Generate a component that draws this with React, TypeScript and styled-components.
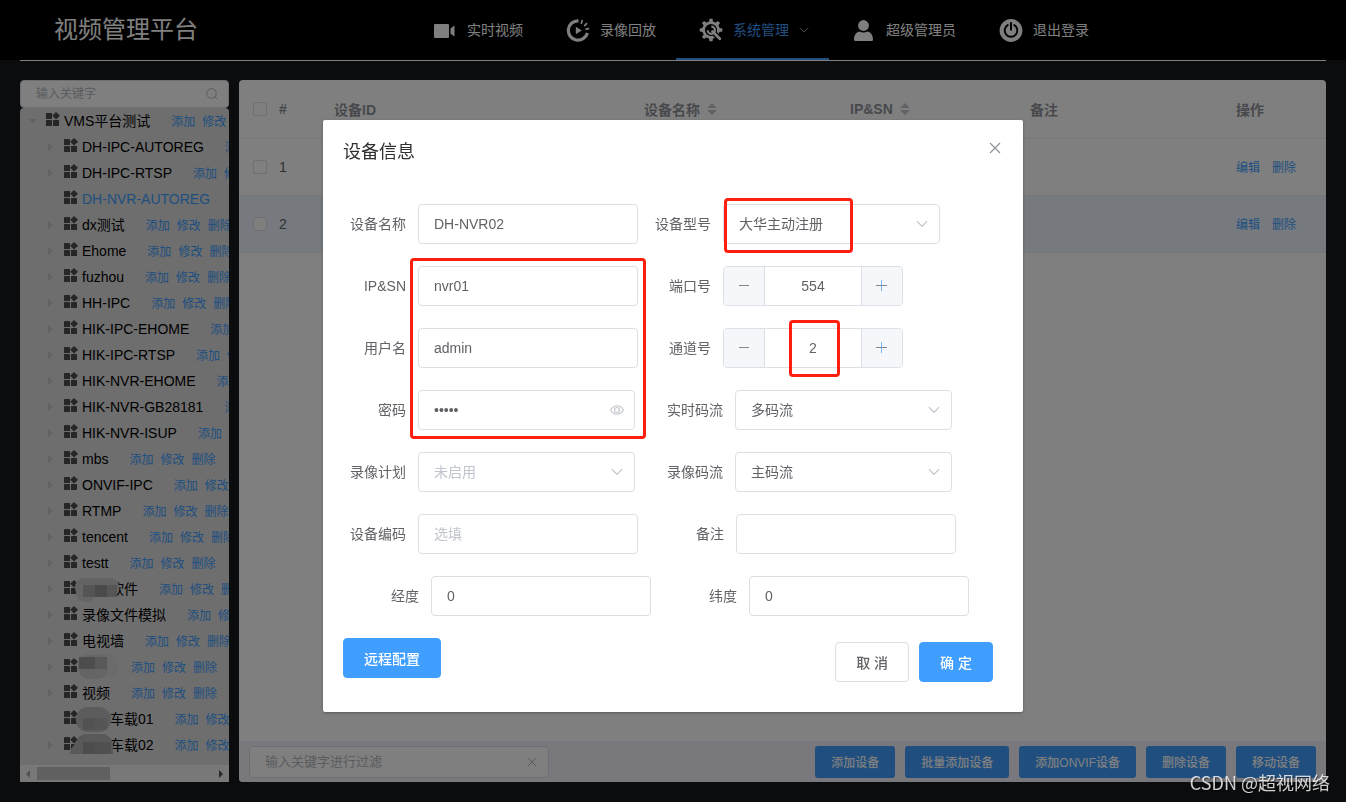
import React from "react";
import styled, { createGlobalStyle } from "styled-components";

const GlobalStyle = createGlobalStyle`
  * { box-sizing: border-box; }
  body {
    margin: 0;
    background: #16181c;
    color: #606266;
    font-family: "Liberation Sans", "Noto Sans CJK SC", sans-serif;
    font-size: 14px;
  }
  input, select, button { font-family: inherit; }
  a { text-decoration: none; }
`;

/* ---------- page shell ---------- */

const Page = styled.div`
  display: flex;
  flex-direction: column;
  min-height: 100vh;
`;

const Header = styled.header`
  display: flex;
  padding: 0 20px;
  height: 60px;
  background: #000;
`;

const Brand = styled.h1`
  flex: none;
  width: 390px;
  margin: 0;
  padding-left: 34px;
  color: #fff;
  font-size: 24px;
  font-weight: 400;
  line-height: 60px;
`;

const Nav = styled.nav`
  display: flex;
`;

const NavLink = styled.a<{ $active?: boolean }>`
  display: flex;
  align-items: center;
  gap: 10px;
  padding: 2px 20px 0 23px;
  border-bottom: 2px solid ${(p) => (p.$active ? "#409eff" : "transparent")};
  color: ${(p) => (p.$active ? "#409eff" : "#fff")};
  white-space: nowrap;
  line-height: 20px;
`;

const Rule = styled.hr`
  width: calc(100% - 40px);
  height: 1px;
  margin: 0 20px;
  border: 0;
  background: #fff;
`;

const Content = styled.main`
  display: flex;
  flex: 1;
  gap: 10px;
  padding: 19px 20px 20px;
`;

/* ---------- sidebar ---------- */

const Sidebar = styled.aside`
  display: flex;
  flex: none;
  flex-direction: column;
  width: 209px;
`;

const SearchBox = styled.label`
  display: flex;
  align-items: center;
  height: 28px;
  padding: 0 10px 0 15px;
  border: 1px solid #dcdfe6;
  border-radius: 4px;
  background: #fff;
`;

const SearchInput = styled.input`
  flex: 1;
  min-width: 0;
  padding: 0;
  border: 0;
  outline: 0;
  background: none;
  color: #606266;
  font-size: 12px;
  &::placeholder { color: #b4b8c0; }
`;

const Tree = styled.ul`
  flex: 1;
  margin: 0;
  padding: 0;
  overflow: hidden;
  border-radius: 4px 4px 0 0;
  background: #dcdcdc;
  list-style: none;
`;

const TreeRow = styled.li<{ $depth: number }>`
  position: relative;
  display: flex;
  align-items: center;
  height: 26px;
  padding-left: ${(p) => p.$depth * 18}px;
  white-space: nowrap;
`;

const ArrowSlot = styled.span`
  display: flex;
  flex: none;
  justify-content: center;
  width: 26px;
`;

const NodeIcon = styled.svg`
  flex: none;
  margin: 0 4px 4px 0;
`;

const NodeLabel = styled.span<{ $active?: boolean; $indent?: number }>`
  padding-left: ${(p) => p.$indent || 0}px;
  color: ${(p) => (p.$active ? "#409eff" : "#000")};
  line-height: 26px;
`;

const NodeActions = styled.span`
  display: flex;
  gap: 7px;
  margin-left: 21px;
  padding-top: 2px;
  font-size: 12px;
  line-height: 24px;
`;

const TextLink = styled.a`
  color: #409eff;
`;

const Smudge = styled.svg`
  position: absolute;
  left: 48px;
  top: 0;
`;

const ScrollTrack = styled.div`
  display: flex;
  align-items: center;
  justify-content: space-between;
  height: 17px;
  padding: 0 5px;
  background: #f1f1f1;
`;

const ScrollThumb = styled.div`
  width: 73px;
  height: 13px;
  margin: 0 auto 0 7px;
  background: #c1c1c1;
`;

/* ---------- device table ---------- */

const Panel = styled.section`
  display: flex;
  flex: 1;
  flex-direction: column;
  min-width: 0;
  overflow: hidden;
  border-radius: 4px;
  background: #fff;
`;

const Table = styled.table`
  width: 100%;
  border-collapse: collapse;
  table-layout: fixed;
`;

const Col = styled.col<{ $w?: number }>`
  width: ${(p) => (p.$w ? `${p.$w}px` : "auto")};
`;

const Th = styled.th`
  height: 58px;
  padding: 0 10px;
  border-bottom: 1px solid #ebeef5;
  color: #909399;
  font-weight: 700;
  text-align: left;
  white-space: nowrap;
`;

const Td = styled.td`
  height: 57px;
  padding: 0 10px;
  border-bottom: 1px solid #ebeef5;
  color: #606266;
`;

const CheckCell = styled(Td)`
  padding: 0 0 0 14px;
`;

const CheckHead = styled(Th)`
  padding: 0 0 0 14px;
`;

const Tr = styled.tr<{ $current?: boolean }>`
  background: ${(p) => (p.$current ? "#ecf5ff" : "#fff")};
`;

const Check = styled.input`
  display: block;
  width: 14px;
  height: 14px;
  margin: 0;
  appearance: none;
  border: 1px solid #dcdfe6;
  border-radius: 2px;
  background: #fff;
`;

const Sortable = styled.span`
  display: flex;
  align-items: center;
  gap: 7px;
`;

const RowActions = styled.div`
  display: flex;
  gap: 12px;
  font-size: 12px;
`;

const Toolbar = styled.div`
  display: flex;
  align-items: center;
  gap: 10px;
  height: 41px;
  margin-top: auto;
  padding: 0 10px;
  background: #f0f1fb;
`;

const FilterBox = styled.label`
  display: flex;
  align-items: center;
  width: 300px;
  height: 32px;
  margin-right: auto;
  padding: 0 8px 0 15px;
  border: 1px solid #dcdfe6;
  border-radius: 4px;
  background: #fff;
`;

const FilterInput = styled(SearchInput)`
  font-size: 13px;
`;

const SmallButton = styled.button`
  flex: none;
  height: 32px;
  padding: 0 16px;
  border: 0;
  border-radius: 3px;
  background: #409eff;
  color: #fff;
  font-size: 12px;
  font-weight: 500;
`;

/* ---------- dialog ---------- */

const Overlay = styled.div`
  position: fixed;
  inset: 0;
  overflow: auto;
  background: rgba(0, 0, 0, 0.5);
`;

const Dialog = styled.div`
  position: relative;
  width: 700px;
  margin: 15vh auto 50px;
  border-radius: 2px;
  background: #fff;
  box-shadow: 0 1px 3px rgba(0, 0, 0, 0.3);
`;

const DialogHeader = styled.div`
  display: flex;
  align-items: center;
  justify-content: space-between;
  padding: 20px 20px 10px;
`;

const DialogTitle = styled.h2`
  margin: 0;
  color: #303133;
  font-size: 18px;
  font-weight: 400;
  line-height: 24px;
`;

const IconButton = styled.button`
  display: flex;
  align-items: center;
  justify-content: center;
  width: 16px;
  height: 16px;
  padding: 0;
  border: 0;
  background: none;
`;

const CloseButton = styled(IconButton)`
  align-self: flex-start;
`;

const Form = styled.form`
  display: flex;
  flex-direction: column;
  gap: 22px;
  padding: 30px 20px 22px;
`;

const FormRow = styled.div`
  display: flex;
  gap: 10px;
`;

const Field = styled.div`
  display: flex;
`;

const FieldLabel = styled.label<{ $w: number }>`
  width: ${(p) => p.$w}px;
  padding-right: 12px;
  line-height: 40px;
  text-align: right;
`;

const TextInput = styled.input`
  width: 220px;
  height: 40px;
  padding: 0 15px;
  border: 1px solid #dcdfe6;
  border-radius: 4px;
  outline: 0;
  background: #fff;
  color: #606266;
  font-size: 14px;
  &::placeholder { color: #c0c4cc; }
`;

const Picker = styled.div`
  display: grid;
  grid-template-columns: 217px;
  align-items: center;
  & > * { grid-area: 1 / 1; }
  & > svg, & > button { justify-self: end; margin-right: 10px; }
  & > svg { pointer-events: none; margin-right: 12px; }
`;

const Select = styled.select<{ $empty?: boolean }>`
  width: 100%;
  height: 40px;
  padding: 0 30px 0 15px;
  appearance: none;
  border: 1px solid #dcdfe6;
  border-radius: 4px;
  background: #fff;
  color: ${(p) => (p.$empty ? "#c0c4cc" : "#606266")};
  font-size: 14px;
`;

const PasswordInput = styled(TextInput)`
  width: 100%;
`;

const Stepper = styled.div`
  display: flex;
  width: 180px;
  height: 40px;
  overflow: hidden;
  border: 1px solid #dcdfe6;
  border-radius: 4px;
`;

const StepButton = styled.button`
  display: flex;
  flex: none;
  align-items: center;
  justify-content: center;
  width: 40px;
  padding: 0 0 2px;
  border: 0;
  background: #f5f7fa;
`;

const StepValue = styled.input`
  flex: 1;
  min-width: 0;
  padding: 0;
  border: solid #dcdfe6;
  border-width: 0 1px;
  outline: 0;
  color: #606266;
  font-size: 14px;
  text-align: center;
`;

const DialogFooter = styled.div`
  display: flex;
  align-items: flex-start;
  justify-content: space-between;
  padding: 0 30px 30px 20px;
`;

const FooterActions = styled.div`
  display: flex;
  gap: 10px;
  padding-top: 4px;
`;

const Button = styled.button<{ $primary?: boolean }>`
  height: 40px;
  padding: 0 20px;
  border: 1px solid ${(p) => (p.$primary ? "#409eff" : "#dcdfe6")};
  border-radius: 4px;
  background: ${(p) => (p.$primary ? "#409eff" : "#fff")};
  color: ${(p) => (p.$primary ? "#fff" : "#606266")};
  font-size: 14px;
  font-weight: 500;
`;

const Mark = styled.div<{ $x: number; $y: number; $w: number; $h: number }>`
  position: absolute;
  left: ${(p) => p.$x}px;
  top: ${(p) => p.$y}px;
  width: ${(p) => p.$w}px;
  height: ${(p) => p.$h}px;
  border: 3px solid #ff1e10;
  border-radius: 4px;
  pointer-events: none;
`;

const Watermark = styled.div`
  position: fixed;
  right: 16px;
  bottom: 7px;
  color: rgba(255, 255, 255, 0.8);
  font-family: "Noto Sans CJK SC", sans-serif;
  font-size: 18px;
  line-height: 26px;
  text-shadow: 1px 1px 1px rgba(0, 0, 0, 0.5);
`;

/* ---------- icons ---------- */

const VideoIcon = () => (
  <svg width="24" height="24" viewBox="0 0 24 24" fill="#fff">
    <rect x="1" y="6" width="15" height="14" rx="1" />
    <path d="M17.500 10.500 21.500 7.600v11L17.500 15.700z" />
  </svg>
);

const PlaybackIcon = () => (
  <svg width="24" height="24" viewBox="0 0 24 24">
    <g fill="none" stroke="#fff">
      <path d="M12.500 2.800A9.700 9.700 0 1 0 21.400 15" strokeWidth="3.200" />
      <path d="M15.200 6 16.300 2.100M18.200 8.100 21 5.100M19.400 11.400l3.800-1" strokeWidth="1.700" />
    </g>
    <path d="M9.800 8.700v7.600l6-3.800z" fill="#fff" />
  </svg>
);

const GearIcon = () => (
  <svg width="24" height="24" viewBox="0 0 24 24" fill="none">
    {[0, 45, 90, 135, 180, 225, 270, 315].map((a) => (
      <path key={a} d="M9.800 5 10.500.700h3l.7 4.300z" fill="#fff" transform={`rotate(${a} 12 12)`} />
    ))}
    <circle cx="12" cy="12" r="7.400" stroke="#fff" strokeWidth="2.600" />
    <path d="M13 13 21.500 21.500" stroke="#000" strokeWidth="5.400" />
    <path d="M13.500 13.500 20.800 20.800" stroke="#fff" strokeWidth="2.800" strokeLinecap="round" />
    <path d="M12.300 8.700A3.600 3.600 0 1 1 8.700 12.300" stroke="#fff" strokeWidth="2.200" />
    <path d="M9 9 12 12" stroke="#000" strokeWidth="1.800" />
  </svg>
);

const UserIcon = () => (
  <svg width="24" height="24" viewBox="0 0 24 24" fill="#fff">
    <circle cx="11.500" cy="7.500" r="5.400" />
    <path d="M2 21.700c0-5.200 3-8.200 6-8.200 1.200.8 2.300 1 3.500 1s2.300-.2 3.500-1c3 0 6 3 6 8.200 0 .8-.5 1.200-1.200 1.200H3.200c-.7 0-1.200-.4-1.200-1.200z" />
  </svg>
);

const PowerIcon = () => (
  <svg width="24" height="24" viewBox="0 0 24 24">
    <circle cx="12" cy="12.500" r="11.400" fill="#fff" />
    <path d="M8.700 7.100a6.300 6.300 0 1 0 6.600 0" fill="none" stroke="#000" strokeWidth="1.900" strokeLinecap="round" />
    <path d="M12 5.100v6.600" stroke="#000" strokeWidth="2" strokeLinecap="round" />
  </svg>
);

const Chevron = ({ color = "#c0c4cc", width = 12 }: { color?: string; width?: number }) => (
  <svg width={width} height="8" viewBox="0 0 12 8" fill="none" stroke={color} strokeWidth="1.200">
    <path d="M1 1.200 6 6.400 11 1.200" />
  </svg>
);

const Cross = ({ size = 12, color = "#909399" }: { size?: number; color?: string }) => (
  <svg width={size} height={size} viewBox="0 0 12 12" fill="none" stroke={color} strokeWidth="1.200">
    <path d="M1 1 11 11M11 1 1 11" />
  </svg>
);

const Magnifier = () => (
  <svg width="12" height="12" viewBox="0 0 12 12" fill="none" stroke="#b4b8c0" strokeWidth="1">
    <circle cx="5.500" cy="5.500" r="4.800" />
    <path d="M9 9l2.200 2.200" />
  </svg>
);

const Eye = () => (
  <svg width="14" height="10" viewBox="0 0 14 10" fill="none" stroke="#c0c4cc" strokeWidth="1.100">
    <path d="M.6 5C2 2.300 4.300.7 7 .7S12 2.300 13.400 5C12 7.700 9.700 9.300 7 9.300S2 7.700.6 5z" />
    <circle cx="7" cy="5" r="2.500" />
  </svg>
);

const SortCaret = () => (
  <svg width="10" height="12" viewBox="0 0 10 12" fill="#c0c4cc">
    <path d="M5 0 10 5H0zM5 12 0 7h10z" />
  </svg>
);

const Grid = () => (
  <NodeIcon width="14" height="14" viewBox="0 0 14 14" fill="#4c4c4c">
    <rect x="0" y="1" width="6" height="6" rx=".5" />
    <rect x="0" y="8" width="6" height="6" rx=".5" />
    <rect x="7" y="8" width="6" height="6" rx=".5" />
    <path d="M10 0 14 3.800 10 7.600 6.200 3.800z" />
  </NodeIcon>
);

const Minus = () => (
  <svg width="12" height="12" viewBox="0 0 12 12">
    <path d="M1 6.500h10" stroke="#85878b" />
  </svg>
);

const Plus = () => (
  <svg width="12" height="12" viewBox="0 0 12 12">
    <path d="M5.500 1v11" stroke="#7ab8f5" />
    <path d="M0 6.500h11" stroke="#85878b" />
  </svg>
);

/* ---------- data ---------- */

type Node = {
  label: string;
  depth?: number;
  arrow?: "down" | "right" | "none";
  active?: boolean;
  indent?: number;
  smudge?: React.ReactNode;
};

const nodes: Node[] = [
  { label: "VMS平台测试", depth: 0, arrow: "down" },
  { label: "DH-IPC-AUTOREG" },
  { label: "DH-IPC-RTSP" },
  { label: "DH-NVR-AUTOREG", arrow: "none", active: true },
  { label: "dx测试" },
  { label: "Ehome" },
  { label: "fuzhou" },
  { label: "HH-IPC" },
  { label: "HIK-IPC-EHOME" },
  { label: "HIK-IPC-RTSP" },
  { label: "HIK-NVR-EHOME" },
  { label: "HIK-NVR-GB28181" },
  { label: "HIK-NVR-ISUP" },
  { label: "mbs" },
  { label: "ONVIF-IPC" },
  { label: "RTMP" },
  { label: "tencent" },
  { label: "testt" },
  {
    label: "软件",
    indent: 28,
    smudge: (
      <>
        <rect x="7" y="2" width="44" height="19" rx="9" fill="#c6c6c6" />
        <rect x="8" y="8" width="20" height="18" rx="9" fill="#cbcbcb" />
        <rect x="15" y="9" width="12" height="12" fill="#a9a9a9" />
        <rect x="27" y="9" width="12" height="12" fill="#959595" />
        <rect x="39" y="9" width="10" height="12" fill="#acacac" />
      </>
    ),
  },
  { label: "录像文件模拟" },
  { label: "电视墙" },
  {
    label: "",
    indent: 28,
    smudge: (
      <>
        <rect x="10" y="0" width="40" height="24" rx="10" fill="#d6d6d6" />
        <rect x="10" y="1" width="30" height="24" rx="11" fill="#cbcbcb" />
        <rect x="11" y="3" width="16" height="12" fill="#9a9a9a" />
        <rect x="27" y="3" width="12" height="12" fill="#b2b2b2" />
      </>
    ),
  },
  { label: "视频" },
  {
    label: "车载01",
    indent: 28,
    arrow: "none",
    smudge: (
      <>
        <rect x="8" y="1" width="35" height="25" rx="12" fill="#b8b8b8" />
        <rect x="15" y="12" width="12" height="12" fill="#a4a4a4" />
        <rect x="27" y="12" width="12" height="12" fill="#acacac" />
      </>
    ),
  },
  {
    label: "车载02",
    indent: 28,
    smudge: (
      <>
        <path d="M2 22c0-5 3-7 6-12 2-6 6-8 12-8h14c7 0 11 6 11 12v8z" fill="#b2b2b2" />
        <rect x="15" y="10" width="12" height="12" fill="#9a9a9a" />
        <rect x="27" y="10" width="16" height="12" fill="#a0a0a0" />
      </>
    ),
  },
];

const TreeArrow = ({ kind }: { kind: "down" | "right" | "none" }) => (
  <ArrowSlot>
    {kind !== "none" && (
      <svg width="8" height="8" viewBox="0 0 8 8" fill="#c0c4cc">
        <path d={kind === "down" ? "M0 2h8L4 6.500z" : "M1 0v8l5-4z"} />
      </svg>
    )}
  </ArrowSlot>
);

const navItems = [
  { label: "实时视频", icon: <VideoIcon /> },
  { label: "录像回放", icon: <PlaybackIcon /> },
  { label: "系统管理", icon: <GearIcon />, active: true },
  { label: "超级管理员", icon: <UserIcon /> },
  { label: "退出登录", icon: <PowerIcon /> },
];

const toolbarButtons = ["添加设备", "批量添加设备", "添加ONVIF设备", "删除设备", "移动设备"];

/* ---------- form fields ---------- */

type FieldProps = { id: string; label: string; w?: number; children: React.ReactNode };

const FormField = ({ id, label, w = 75, children }: FieldProps) => (
  <Field>
    <FieldLabel htmlFor={id} $w={w}>{label}</FieldLabel>
    {children}
  </Field>
);

const SelectBox = ({ id, value, empty }: { id: string; value: string; empty?: boolean }) => (
  <Picker>
    <Select id={id} defaultValue={value} $empty={empty}>
      <option>{value}</option>
    </Select>
    <Chevron />
  </Picker>
);

const NumberBox = ({ id, value }: { id: string; value: string }) => (
  <Stepper>
    <StepButton type="button" aria-label="减少"><Minus /></StepButton>
    <StepValue id={id} defaultValue={value} />
    <StepButton type="button" aria-label="增加"><Plus /></StepButton>
  </Stepper>
);

export default function App() {
  return (
    <>
      <GlobalStyle />
      <Page>
        <Header>
          <Brand>视频管理平台</Brand>
          <Nav>
            {navItems.map((n) => (
              <NavLink key={n.label} href="#" $active={n.active}>
                {n.icon}
                {n.label}
                {n.active && <Chevron color="#909399" width={10} />}
              </NavLink>
            ))}
          </Nav>
        </Header>
        <Rule />
        <Content>
          <Sidebar>
            <SearchBox>
              <SearchInput placeholder="输入关键字" aria-label="输入关键字" />
              <Magnifier />
            </SearchBox>
            <Tree>
              {nodes.map((n, i) => (
                <TreeRow key={i} $depth={n.depth ?? 1}>
                  <TreeArrow kind={n.arrow ?? "right"} />
                  <Grid />
                  <NodeLabel $active={n.active} $indent={n.indent}>{n.label}</NodeLabel>
                  <NodeActions>
                    <TextLink href="#">添加</TextLink>
                    <TextLink href="#">修改</TextLink>
                    <TextLink href="#">删除</TextLink>
                  </NodeActions>
                  {n.smudge && <Smudge width="56" height="26" viewBox="0 0 56 26">{n.smudge}</Smudge>}
                </TreeRow>
              ))}
            </Tree>
            <ScrollTrack>
              <svg width="5" height="8" viewBox="0 0 5 8" fill="#a3a3a3"><path d="M5 0v8L1 4z" /></svg>
              <ScrollThumb />
              <svg width="5" height="8" viewBox="0 0 5 8" fill="#505050"><path d="M0 0v8l4-4z" /></svg>
            </ScrollTrack>
          </Sidebar>
          <Panel>
            <Table>
              <colgroup>
                <Col $w={30} />
                <Col $w={55} />
                <Col />
                <Col $w={206} />
                <Col $w={180} />
                <Col $w={206} />
                <Col $w={100} />
              </colgroup>
              <thead>
                <tr>
                  <CheckHead><Check type="checkbox" aria-label="全选" /></CheckHead>
                  <Th>#</Th>
                  <Th>设备ID</Th>
                  <Th><Sortable>设备名称<SortCaret /></Sortable></Th>
                  <Th><Sortable>IP&amp;SN<SortCaret /></Sortable></Th>
                  <Th>备注</Th>
                  <Th>操作</Th>
                </tr>
              </thead>
              <tbody>
                {[1, 2].map((n) => (
                  <Tr key={n} $current={n === 2}>
                    <CheckCell><Check type="checkbox" aria-label={`选择 ${n}`} /></CheckCell>
                    <Td>{n}</Td>
                    <Td />
                    <Td />
                    <Td />
                    <Td />
                    <Td>
                      <RowActions>
                        <TextLink href="#">编辑</TextLink>
                        <TextLink href="#">删除</TextLink>
                      </RowActions>
                    </Td>
                  </Tr>
                ))}
              </tbody>
            </Table>
            <Toolbar>
              <FilterBox>
                <FilterInput placeholder="输入关键字进行过滤" aria-label="输入关键字进行过滤" />
                <IconButton type="button" aria-label="清除"><Cross size={10} color="#b4b8c0" /></IconButton>
              </FilterBox>
              {toolbarButtons.map((b) => (
                <SmallButton key={b} type="button">{b}</SmallButton>
              ))}
            </Toolbar>
          </Panel>
        </Content>
      </Page>

      <Overlay>
        <Dialog role="dialog" aria-labelledby="dialog-title">
          <DialogHeader>
            <DialogTitle id="dialog-title">设备信息</DialogTitle>
            <CloseButton type="button" aria-label="关闭"><Cross /></CloseButton>
          </DialogHeader>
          <Form>
            <FormRow>
              <FormField id="name" label="设备名称"><TextInput id="name" defaultValue="DH-NVR02" /></FormField>
              <FormField id="model" label="设备型号"><SelectBox id="model" value="大华主动注册" /></FormField>
            </FormRow>
            <FormRow>
              <FormField id="ip" label="IP&SN"><TextInput id="ip" defaultValue="nvr01" /></FormField>
              <FormField id="port" label="端口号"><NumberBox id="port" value="554" /></FormField>
            </FormRow>
            <FormRow>
              <FormField id="user" label="用户名"><TextInput id="user" defaultValue="admin" /></FormField>
              <FormField id="channel" label="通道号"><NumberBox id="channel" value="2" /></FormField>
            </FormRow>
            <FormRow>
              <FormField id="password" label="密码">
                <Picker>
                  <PasswordInput id="password" type="password" defaultValue="admin" />
                  <IconButton type="button" aria-label="显示密码"><Eye /></IconButton>
                </Picker>
              </FormField>
              <FormField id="live" label="实时码流" w={90}><SelectBox id="live" value="多码流" /></FormField>
            </FormRow>
            <FormRow>
              <FormField id="plan" label="录像计划"><SelectBox id="plan" value="未启用" empty /></FormField>
              <FormField id="record" label="录像码流" w={90}><SelectBox id="record" value="主码流" /></FormField>
            </FormRow>
            <FormRow>
              <FormField id="code" label="设备编码"><TextInput id="code" placeholder="选填" /></FormField>
              <FormField id="remark" label="备注" w={88}><TextInput id="remark" /></FormField>
            </FormRow>
            <FormRow>
              <FormField id="lng" label="经度" w={88}><TextInput id="lng" defaultValue="0" /></FormField>
              <FormField id="lat" label="纬度" w={88}><TextInput id="lat" defaultValue="0" /></FormField>
            </FormRow>
          </Form>
          <DialogFooter>
            <Button type="button" $primary>远程配置</Button>
            <FooterActions>
              <Button type="button">取 消</Button>
              <Button type="button" $primary>确 定</Button>
            </FooterActions>
          </DialogFooter>
          <Mark $x={401} $y={78} $w={129} $h={55} />
          <Mark $x={87} $y={138} $w={236} $h={181} />
          <Mark $x={466} $y={200} $w={51} $h={57} />
        </Dialog>
      </Overlay>
      <Watermark>CSDN @超视网络</Watermark>
    </>
  );
}
